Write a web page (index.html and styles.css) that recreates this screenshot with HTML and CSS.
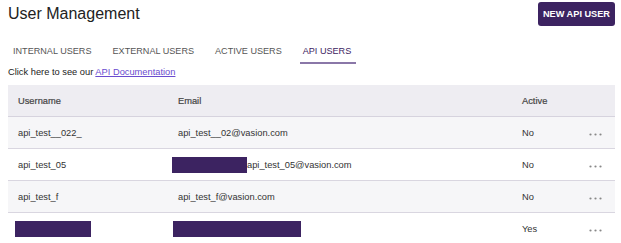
FILE: index.html
```html
<!DOCTYPE html>
<html lang="en">
<head>
    <meta charset="UTF-8">
    <meta name="viewport" content="width=device-width, initial-scale=1.0">
    <title>User Management</title>
<link rel="stylesheet" href="styles.css">
</head>
<body>
    <div class="page">
        <div class="header">
            <h1 class="title">User Management</h1>
            <button class="new-button">NEW API USER</button>
        </div>

        <div class="tabs">
            <div class="tab">INTERNAL USERS</div>
            <div class="tab">EXTERNAL USERS</div>
            <div class="tab">ACTIVE USERS</div>
            <div class="tab active">API USERS</div>
        </div>

        <div class="docs">Click here to see our <a href="#">API Documentation</a></div>

        <table class="users">
            <thead>
                <tr>
                    <th class="col-user">Username</th>
                    <th class="col-email">Email</th>
                    <th class="col-active">Active</th>
                    <th class="col-menu"></th>
                </tr>
            </thead>
            <tbody>
                <tr>
                    <td>api_test__022_</td>
                    <td>api_test__02@vasion.com</td>
                    <td>No</td>
                    <td class="menu"><svg class="dots" width="13" height="3" viewBox="0 0 13 3"><circle cx="1.5" cy="1.5" r="1.1"/><circle cx="6.5" cy="1.5" r="1.1"/><circle cx="11.5" cy="1.5" r="1.1"/></svg></td>
                </tr>
                <tr>
                    <td>api_test_05</td>
                    <td><span class="redact redact-short"></span>api_test_05@vasion.com</td>
                    <td>No</td>
                    <td class="menu"><svg class="dots" width="13" height="3" viewBox="0 0 13 3"><circle cx="1.5" cy="1.5" r="1.1"/><circle cx="6.5" cy="1.5" r="1.1"/><circle cx="11.5" cy="1.5" r="1.1"/></svg></td>
                </tr>
                <tr>
                    <td>api_test_f</td>
                    <td>api_test_f@vasion.com</td>
                    <td>No</td>
                    <td class="menu"><svg class="dots" width="13" height="3" viewBox="0 0 13 3"><circle cx="1.5" cy="1.5" r="1.1"/><circle cx="6.5" cy="1.5" r="1.1"/><circle cx="11.5" cy="1.5" r="1.1"/></svg></td>
                </tr>
                <tr>
                    <td><span class="redact redact-user"></span></td>
                    <td><span class="redact redact-email"></span></td>
                    <td>Yes</td>
                    <td class="menu"><svg class="dots" width="13" height="3" viewBox="0 0 13 3"><circle cx="1.5" cy="1.5" r="1.1"/><circle cx="6.5" cy="1.5" r="1.1"/><circle cx="11.5" cy="1.5" r="1.1"/></svg></td>
                </tr>
            </tbody>
        </table>
    </div>
</body>
</html>
```

FILE: styles.css
```css
body {
    margin: 0;
    background: white;
    font-family: "Liberation Sans", Arial, sans-serif;
    color: #333;
}

.page {
    padding: 0 6px 0 8px;
}

.header {
    display: flex;
    justify-content: space-between;
    align-items: flex-start;
    height: 38px;
    padding-top: 2px;
}

.title {
    margin: 0;
    font-size: 16px;
    font-weight: normal;
    color: #222;
    line-height: 24px;
}

.new-button {
    height: 24px;
    width: 77px;
    padding: 0;
    border: none;
    border-radius: 3px;
    background: #3c2361;
    color: white;
    font-family: "Liberation Sans", Arial, sans-serif;
    font-size: 9.2px;
    font-weight: bold;
}

.tabs {
    display: flex;
    height: 22px;
    padding-left: 5px;
    margin-top: 1px;
}

.tab {
    font-size: 9.1px;
    color: #555;
    margin-right: 21px;
    height: 21px;
    line-height: 21px;
}

.tab.active {
    color: #3c2361;
    border-bottom: 2px solid #8a77a8;
    padding: 0 5px 0 3px;
    margin-left: -3px;
}

.docs {
    font-size: 9.3px;
    color: #222;
    height: 16px;
    line-height: 16px;
    margin-top: 1px;
    margin-bottom: 5px;
}

.docs a {
    color: #6a4ccf;
}

.users {
    width: 607px;
    border-collapse: collapse;
    font-size: 9.3px;
    color: #333;
}

.users th {
    background: #eeedf2;
    height: 31px;
    text-align: left;
    font-weight: normal;
    color: #444;
    padding: 0;
    border-bottom: 1px solid #d6d3de;
    -webkit-text-stroke: 0.2px #444;
}

.users td {
    height: 31px;
    padding: 0;
    line-height: 16px;
    border-bottom: 1px solid #d9d6e0;
}

.users tbody tr:nth-child(odd) td {
    background: #f6f6f8;
}

.users tbody tr:last-child td {
    border-bottom: none;
}

.col-user {
    width: 160px;
}

.col-email {
    width: 344px;
}

.col-active {
    width: 66px;
}

.users th.col-user,
.users td:first-child {
    padding-left: 10px;
}

.menu {
    line-height: 0;
}

.dots {
    fill: #888;
    margin-left: 1px;
}

.redact {
    display: inline-block;
    vertical-align: top;
    background: #3c2361;
    height: 16px;
}

.redact-short {
    width: 75px;
    margin-left: -6px;
}

.redact-user {
    width: 76px;
    margin-left: -3px;
}

.redact-email {
    width: 128px;
    margin-left: -5px;
}
```
